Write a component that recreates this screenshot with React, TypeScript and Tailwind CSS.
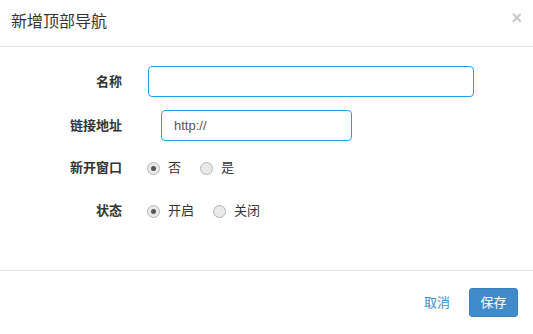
import React from "react";

function Radio({ checked, label }: { checked?: boolean; label: string }) {
  return (
    <label className="flex items-center">
      <span className="w-[13px] h-[13px] rounded-full border border-[#b5b5b5] bg-[#e9e9e9] flex items-center justify-center">
        {checked && <span className="w-[5px] h-[5px] rounded-full bg-[#555]" />}
      </span>
      <span className="ml-[8px] text-[13px] text-[#333]">{label}</span>
    </label>
  );
}

export default function App() {
  return (
    <div
      className="w-[533px] h-[334px] bg-white flex flex-col"
      style={{ fontFamily: '"Liberation Sans", "Noto Sans CJK SC", sans-serif' }}
    >
      <div className="h-[47px] border-b border-[#e5e5e5] flex items-center justify-between pl-[11px] pr-[11px] shrink-0">
        <div className="text-[16px] text-[#333] -mt-[2px]">新增顶部导航</div>
        <div className="text-[18px] font-bold text-[#c8c8c8] leading-none -mt-[11px]">×</div>
      </div>
      <div className="flex-1 flex flex-col pt-[19px]">
        <div className="flex items-center h-[31px]">
          <div className="w-[122px] text-right text-[13px] font-bold text-[#333]">名称</div>
          <input className="ml-[26px] w-[326px] h-[31px] border border-[#1fa2e6] rounded-[4px] outline-none px-[12px] text-[13px]" />
        </div>
        <div className="flex items-center h-[31px] mt-[13px]">
          <div className="w-[122px] text-right text-[13px] font-bold text-[#333]">链接地址</div>
          <input
            defaultValue="http://"
            className="ml-[39px] w-[191px] h-[31px] border border-[#1fa2e6] rounded-[4px] outline-none px-[12px] text-[13px] text-[#555]"
          />
        </div>
        <div className="flex items-center h-[20px] mt-[17px]">
          <div className="w-[122px] text-right text-[13px] font-bold text-[#333]">新开窗口</div>
          <div className="ml-[25px] flex items-center gap-[19px]">
            <Radio checked label="否" />
            <Radio label="是" />
          </div>
        </div>
        <div className="flex items-center h-[20px] mt-[23px]">
          <div className="w-[122px] text-right text-[13px] font-bold text-[#333]">状态</div>
          <div className="ml-[25px] flex items-center gap-[19px]">
            <Radio checked label="开启" />
            <Radio label="关闭" />
          </div>
        </div>
      </div>
      <div className="h-[64px] border-t border-[#e5e5e5] flex items-center justify-end pr-[15px] shrink-0">
        <span className="text-[13px] text-[#428bca] mr-[19px]">取消</span>
        <button className="w-[49px] h-[29px] rounded-[3px] bg-[#428bca] text-white text-[13px] border border-[#3b7fbc]">保存</button>
      </div>
    </div>
  );
}
